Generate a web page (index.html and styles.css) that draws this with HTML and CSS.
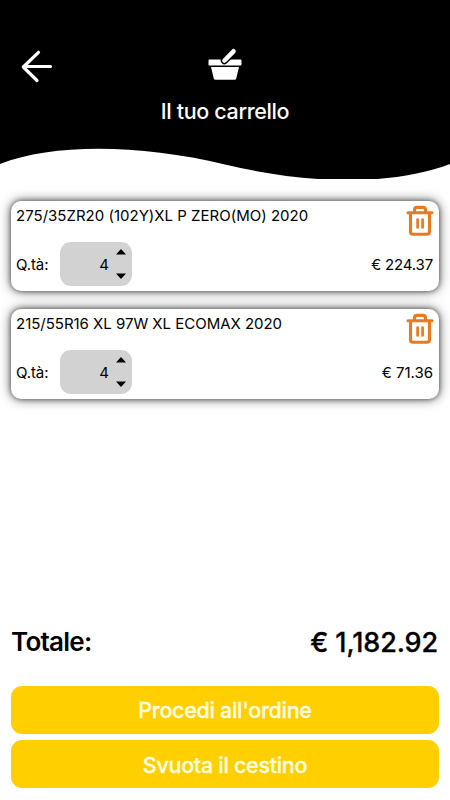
FILE: index.html
```
<!DOCTYPE html>
<html lang="it">
<head>
<meta charset="utf-8">
<title>Il tuo carrello</title>
<link rel="stylesheet" href="styles.css">
</head>
<body>
<svg class="symbols" aria-hidden="true">
  <symbol id="trash" viewBox="0 0 28 32">
    <path d="M2 7.800H26M4.500 8V26.500Q4.500 29.300 7 29.300H21Q23.500 29.300 23.500 26.500V8M8.500 7.500V5Q8.500 2.400 11 2.400H17Q19.500 2.400 19.500 5V7.500" fill="none" stroke="#e97a22" stroke-width="3.100" stroke-linecap="round" stroke-linejoin="round"/>
    <path d="M11.600 14.500V22.500M16.600 14.500V22.500" fill="none" stroke="#e97a22" stroke-width="2.700" stroke-linecap="round"/>
  </symbol>
</svg>
<header class="header">
  <div class="bar">
    <svg class="back" viewBox="0 0 34 34"><path d="M18.500 2.300L3.300 17L17 30.500M4 16.500H30.500" fill="none" stroke="#fff" stroke-width="3.200" stroke-linecap="round" stroke-linejoin="round"/></svg>
    <div class="heading">
      <svg class="basket" viewBox="0 0 34 34"><path d="M1.500 12.500H32.500Q33.500 12.500 33.500 13.500V17.700Q33.500 18.500 32.500 18.500H1.500Q.5 18.500 .5 17.700V13.500Q.5 12.500 1.500 12.500ZM3 20H31L28.300 31.200Q28 32.700 26.500 32.700H7.500Q6 32.700 5.700 31.200Z" fill="#fff"/><path d="M16.500 13.500L25.500 4.300" fill="none" stroke="#000" stroke-width="7.500" stroke-linecap="round"/><path d="M16.500 13.500L25.500 4.300" fill="none" stroke="#fff" stroke-width="4.600" stroke-linecap="round"/></svg>
      <h1 class="title">Il tuo carrello</h1>
    </div>
  </div>
  <svg class="wave" viewBox="0 0 450 35"><path d="M0 0H450V20C390 42.200 310 40.500 225 20.500C140 .5 55-1 0 20Z"/></svg>
</header>
<main class="cart">
  <article class="card">
    <div class="row"><h2 class="name name-first">275/35ZR20 (102Y)XL P ZERO(MO) 2020</h2><svg class="trash"><use href="#trash"/></svg></div>
    <div class="details"><span class="label">Q.tà:</span><div class="qty"><span>4</span><svg class="steps" viewBox="0 0 10 32"><path d="M0 6.500L5 1L10 6.500ZM0 25.500H10L5 31Z"/></svg></div><span class="price">€ 224.37</span></div>
  </article>
  <article class="card">
    <div class="row"><h2 class="name name-second">215/55R16 XL 97W XL ECOMAX 2020</h2><svg class="trash"><use href="#trash"/></svg></div>
    <div class="details"><span class="label">Q.tà:</span><div class="qty"><span>4</span><svg class="steps" viewBox="0 0 10 32"><path d="M0 6.500L5 1L10 6.500ZM0 25.500H10L5 31Z"/></svg></div><span class="price price-second">€ 71.36</span></div>
  </article>
</main>
<footer class="footer">
  <div class="total"><span class="total-label">Totale:</span><span class="amount">€ 1,182.92</span></div>
  <button class="button">Procedi all'ordine</button>
  <button class="button clear">Svuota il cestino</button>
</footer>
</body>
</html>
```

FILE: styles.css
```
* { box-sizing: border-box; }
body { margin: 0; height: 800px; display: flex; flex-direction: column; background: #fff; color: #000; font-family: Inter, "Liberation Sans", sans-serif; overflow: hidden; }
.symbols { display: none; }
.header { flex: 0 0 179px; }
.bar { height: 144px; background: #000; display: grid; grid-template-columns: 75px 1fr 75px; align-items: start; }
.back { width: 34px; height: 34px; margin: 50px 0 0 20px; }
.heading { display: flex; flex-direction: column; align-items: center; padding-top: 47px; }
.basket { width: 34px; height: 34px; }
.title { margin: 16px 0 0; color: #fff; font-size: 21.5px; line-height: 28px; font-weight: 500; letter-spacing: -0.35px; white-space: nowrap; }
.wave { display: block; width: 450px; height: 35px; }
.cart { flex: 1; padding: 22px 11px 0; display: flex; flex-direction: column; gap: 18px; }
.card { height: 90px; border-radius: 10px; background: #fff; box-shadow: 0 0 5px rgba(0,0,0,.5), 0 0 12px rgba(0,0,0,.6); padding: 0 6px 0 5px; }
.row { display: flex; justify-content: space-between; height: 41px; }
.name { margin: 4px 0 0; font-size: 15px; line-height: 21px; font-weight: 400; white-space: nowrap; }
.name-first { letter-spacing: 0.01px; }
.name-second { letter-spacing: -0.02px; }
.trash { width: 28px; height: 32px; margin: 4px -1px 0 0; }
.details { display: flex; align-items: center; height: 44px; font-size: 15px; }
.label { width: 44px; letter-spacing: -0.1px; }
.qty { width: 72px; height: 44px; border-radius: 11px; background: #d2d2d2; display: flex; align-items: center; justify-content: flex-end; gap: 7px; padding-right: 6px; }
.steps { width: 10px; height: 32px; }
.price { margin-left: auto; letter-spacing: -0.17px; }
.price-second { letter-spacing: 0; }
.footer { padding: 0 11px 12px; }
.total { display: flex; justify-content: space-between; align-items: center; height: 36px; margin-bottom: 26px; font-size: 26px; font-weight: 600; letter-spacing: -.75px; }
.amount { font-weight: 500; font-size: 27px; letter-spacing: -.1px; margin-right: 1px; -webkit-text-stroke: .3px #000; }
.total-label { margin-top: -1px; }
.button { display: block; width: 100%; height: 48px; border: 0; border-radius: 11px; padding: 1px 0 0; background: #ffcf00; color: #fffde0; font: 500 21.5px/47px Inter, "Liberation Sans", sans-serif; letter-spacing: -.3px; -webkit-text-stroke: .3px #fffde0; }
.clear { margin-top: 6px; padding-top: 1px; line-height: 46px; }
```
